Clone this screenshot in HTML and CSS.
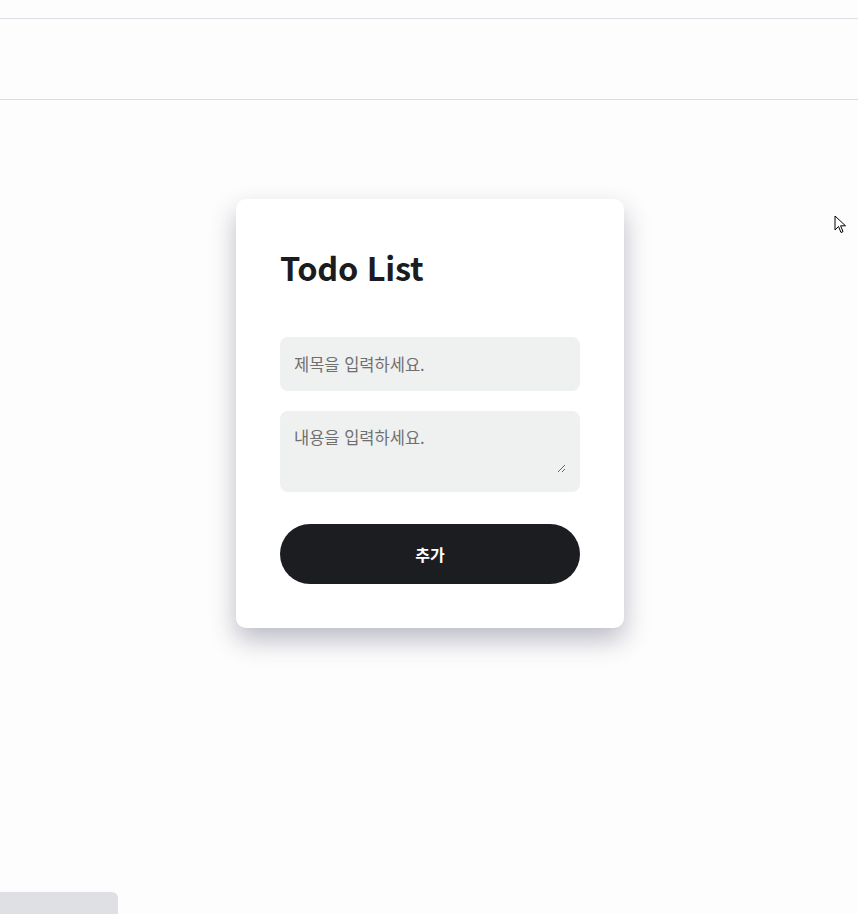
FILE: index.html
```html
<!DOCTYPE html>
<html lang="ko">
<head>
<meta charset="utf-8">
<link rel="stylesheet" href="styles.css">
</head>
<body>
<div class="topbar"></div>
<header class="header"></header>
<main class="main">
  <section class="card">
    <h1 class="title">Todo List</h1>
    <form class="form">
      <input class="field" type="text" placeholder="제목을 입력하세요.">
      <div class="area-wrap">
        <textarea class="area" placeholder="내용을 입력하세요."></textarea>
      </div>
      <button class="btn" type="button">추가</button>
    </form>
  </section>
</main>
<div class="tab"></div>
<svg class="cursor" width="13" height="20" viewBox="0 0 13 20"><path d="M1 1 L1 15 L4.5 11.5 L7 17.5 L9 16.6 L6.6 10.8 L11.5 10.8 Z" fill="#fff" stroke="#000" stroke-width="1" stroke-linejoin="miter"/></svg>
</body>
</html>
```
FILE: styles.css
```css
* { box-sizing: border-box; }
html, body { margin: 0; padding: 0; }
body {
  background: #fdfdfd;
  font-family: "Noto Sans CJK KR", "Noto Sans", sans-serif;
  width: 858px;
  height: 914px;
  overflow: hidden;
  position: relative;
}
.topbar {
  height: 19px;
  border-bottom: 1px solid #e0dfe5;
}
.header {
  height: 81px;
  border-bottom: 1px solid #dcdcdc;
}
.main {
  display: flex;
  justify-content: center;
  padding-top: 99px;
  padding-left: 2px;
}
.card {
  width: 388px;
  background: #fff;
  border-radius: 10px;
  box-shadow: 0 12px 26px rgba(50, 50, 80, 0.32);
  padding: 44px 44px 44px;
}
.title {
  margin: 0;
  font-size: 32.5px;
  font-weight: 700;
  color: #1b1c20;
  line-height: 48px;
  letter-spacing: -0.3px;
}
.form {
  display: flex;
  flex-direction: column;
  margin-top: 46px;
}
.field {
  width: 300px;
  height: 54px;
  border: none;
  border-radius: 8px;
  background: #eff0f0;
  padding: 0 14px;
  font-family: inherit;
  font-size: 16.5px;
  color: #333;
  outline: none;
}
.field::placeholder, .area::placeholder { color: #6f6f6f; }
.area-wrap {
  margin-top: 20px;
  width: 300px;
  height: 81px;
  border-radius: 8px;
  background: #eff0f0;
  padding: 14px 14px 19px;
  display: flex;
}
.area {
  flex: 1;
  height: 48px;
  border: none;
  background: transparent;
  padding: 0;
  margin: 0;
  font-family: inherit;
  font-size: 16.5px;
  line-height: 24px;
  color: #333;
  outline: none;
  resize: vertical;
}
.btn {
  margin-top: 32px;
  height: 60px;
  width: 300px;
  border: none;
  border-radius: 30px;
  background: #1c1d21;
  color: #fff;
  font-family: inherit;
  font-size: 16px;
  font-weight: 700;
}
.tab {
  position: absolute;
  left: 0;
  top: 892px;
  width: 118px;
  height: 22px;
  background: #dfe0e4;
  border-top-right-radius: 6px;
}
.cursor {
  position: absolute;
  left: 834px;
  top: 215px;
}
```
